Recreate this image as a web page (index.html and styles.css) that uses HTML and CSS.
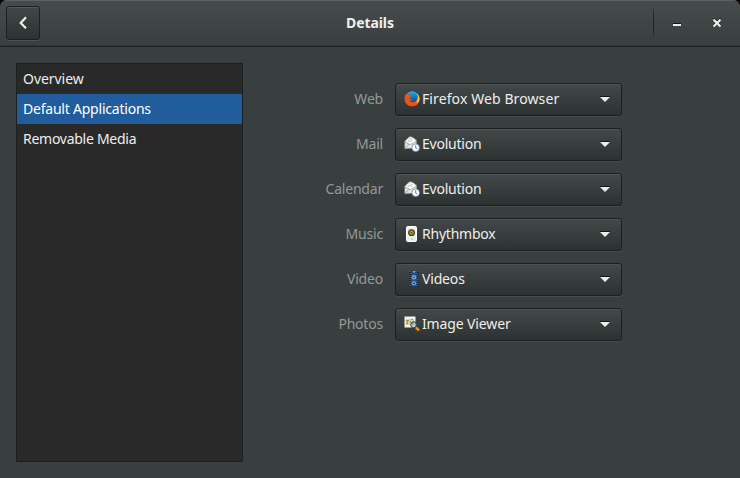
FILE: index.html
```html
<!DOCTYPE html>
<html lang="en">
<head>
<meta charset="utf-8">
<title>Details</title>
<link rel="stylesheet" href="styles.css">
</head>
<body>
<div class="window">
  <header class="titlebar">
    <button class="back" aria-label="Back"><svg width="16" height="16" viewBox="0 0 16 16"><path d="M11 2.2 5.7 8l5.3 5.2" fill="none" stroke="#eeeeec" stroke-width="2.2"/></svg></button>
    <h1 class="title">Details</h1>
    <div class="controls">
      <svg class="minimize" width="8" height="4" viewBox="0 0 8 4"><path d="M0 0h8v1H0z" fill="#141717"/><path d="M0 1h8v2H0z" fill="#eeeeec"/></svg>
      <svg class="close" width="8" height="10" viewBox="0 0 8 10"><path d="m.5.5 7 7m0-7-7 7" stroke="#171a1a" stroke-width="2.2"/><path d="m.5 1.5 7 7m0-7-7 7" stroke="#eeeeec" stroke-width="2.2"/></svg>
    </div>
  </header>
  <main class="content">
    <nav class="sidebar">
      <div class="item"><span class="t-overview">Overview</span></div>
      <div class="item selected"><span class="t-default">Default Applications</span></div>
      <div class="item"><span class="t-media">Removable Media</span></div>
    </nav>
    <section class="form">
      <label class="label">Web</label>
      <button class="combo">
        <svg class="icon" width="16" height="16" viewBox="0 0 16 16"><defs><linearGradient id="fox" x1="0" y1="1" x2="1" y2="0"><stop stop-color="#d82b17"/><stop offset=".55" stop-color="#ee6512"/><stop offset="1" stop-color="#ffd54a"/></linearGradient><linearGradient id="globe" x1="0" y1="0" x2="0" y2="1"><stop stop-color="#22aee5"/><stop offset="1" stop-color="#1c3979"/></linearGradient></defs><circle cx="8" cy="8" r="7.6" fill="url(#fox)"/><circle cx="8.2" cy="6.3" r="5.9" fill="url(#globe)"/><path d="M1.3 3.2 3 4.1c1-.6 1.8-.4 2.2.2L7 5 5.7 6.6l-.5 1 1.3.8 1.8.1c-.5 1.3-1.7 1.5-2.8 1.2 1.6 1.8 4.6 1.9 6.3.3L11 14l-6 .8L1.2 11 .8 6z" fill="#e95516"/><path d="M12.7 2.4c1.7 2.4 1.5 5.6-.5 8.2l1.6 1.1c2.4-2.8 2.3-6.7-1.1-9.3z" fill="#ffc33d"/></svg>
        <span class="t-firefox">Firefox Web Browser</span><i class="arrow"></i>
      </button>
      <label class="label">Mail</label>
      <button class="combo">
        <svg class="icon" width="16" height="16" viewBox="0 0 16 16"><use href="#mail"/></svg>
        <span class="t-evolution">Evolution</span><i class="arrow"></i>
      </button>
      <label class="label">Calendar</label>
      <button class="combo">
        <svg class="icon" width="16" height="16" viewBox="0 0 16 16"><g id="mail"><path d="M.7 5.3 5.2.7h2.5l4.8 3.4.6 8.2-12.5.5z" fill="#e3e2df" stroke="#77756f" stroke-width=".5"/><path d="m2.6 3.4 7-1.1 2 3.8-4.5 2.6-4.2-2.1z" fill="#fff"/><path d="m3.5 4.3 5.3-.8M3.9 5.6l4.7-.7" stroke="#aaa9a5" stroke-width=".6"/><path d="m.8 6 5.4 2.5 6.3-3.2M1.1 12.3l4-4.1" fill="none" stroke="#8c8b86" stroke-width=".7"/><circle cx="11.7" cy="11.7" r="3.8" fill="#fff" stroke="#7484a9" stroke-width=".8"/><path d="M11.7 9.2v2.9l1.5.9" fill="none" stroke="#485987" stroke-width=".8"/></g></svg>
        <span class="t-evolution">Evolution</span><i class="arrow"></i>
      </button>
      <label class="label">Music</label>
      <button class="combo">
        <svg class="icon" width="16" height="16" viewBox="0 0 16 16"><rect x="2.5" y=".5" width="10" height="15" rx="1.3" fill="#eeeeec" stroke="#fff"/><circle cx="7.5" cy="6.7" r="3.4" fill="#34341f"/><circle cx="7.5" cy="6.7" r="2.4" fill="#a49430"/><circle cx="7.5" cy="6.7" r=".8" fill="#514b22"/><circle cx="8" cy="12.8" r="1" fill="#c9c9c7"/></svg>
        <span class="t-rhythmbox">Rhythmbox</span><i class="arrow"></i>
      </button>
      <label class="label">Video</label>
      <button class="combo">
        <svg class="icon" width="16" height="16" viewBox="0 0 16 16"><path d="M5 0h10v16H5z" fill="#20272d"/><path d="M7 .5h6v15H7z" fill="#284d82"/><circle cx="10" cy="6.2" r="2.3" fill="#74a6df"/><circle cx="10" cy="12.3" r="2.3" fill="#6495d0"/><path d="M8.3 0 10 2l2-2z" fill="#70a2dc"/><circle cx="10" cy="6.2" r=".8" fill="#1c3861"/><circle cx="10" cy="12.3" r=".8" fill="#1c3861"/><path d="M6 0v16M14 0v16" stroke="#737b7b" stroke-width="1" stroke-dasharray="1 1"/></svg>
        <span class="t-videos">Videos</span><i class="arrow"></i>
      </button>
      <label class="label">Photos</label>
      <button class="combo">
        <svg class="icon" width="16" height="16" viewBox="0 0 16 16"><path d="M.5.5h11v11H.5z" fill="#f4f3ec"/><path d="M2 3h8v6H2z" fill="#d8d7a4"/><path d="m2 4 2 3-2 1m4-3 2 3 2-3" fill="none" stroke="#679049"/><path d="M3 4.5h2m2-1h2" stroke="#c58125"/><circle cx="9.7" cy="8.8" r="3" fill="#8193a0" fill-opacity=".45" stroke="#354963" stroke-width="1"/><path d="m12 11.7 3 3" stroke="#86510d" stroke-width="3.4"/><path d="m12 11.5 3 2.9" stroke="#f09b21" stroke-width="2"/></svg>
        <span class="t-image">Image Viewer</span><i class="arrow"></i>
      </button>
    </section>
  </main>
</div>
</body>
</html>
```
FILE: styles.css
```css
* { box-sizing: border-box; }
body { margin: 0; background: #080506; font: 14px/20px "Noto Sans", sans-serif; color: #eeeeec; }
button { font: inherit; color: inherit; padding: 0; }
svg { display: block; }
.window { width: 740px; height: 478px; border-radius: 7px 7px 0 0; overflow: hidden; background: #393f3f; }
.titlebar { height: 47px; display: grid; grid-template-columns: 1fr auto 1fr; align-items: center; padding: 0 19px 1px 6px; background: linear-gradient(#454c4b, #393f3f); border-bottom: 1px solid #1e2222; box-shadow: inset 0 1px #596362, inset 0 -1px #303535; }
.back { width: 34px; height: 34px; display: grid; place-items: center; border: 1px solid #1d2020; border-radius: 3px; background: linear-gradient(#424848, #2d3232); box-shadow: inset 0 1px #535a59, 0 1px #4b5251; }
.title { margin: 0 0 0 13px; font-size: 14px; font-weight: 700; line-height: 20px; letter-spacing: -.1px; }
.controls { justify-self: end; display: flex; align-items: center; height: 34px; }
.controls::before { content: ""; width: 1px; height: 34px; margin-right: 19px; background: linear-gradient(transparent, #1e2222 30%, #1e2222 70%, transparent); }
.minimize { margin: 4px 32px 0 0; }
.close { margin-top: 0; }
.content { display: flex; padding: 16px; height: 431px; }
.sidebar { width: 227px; height: 399px; border: 1px solid #1d2020; background: #292929; }
.item { height: 30px; padding: 5px 6px; white-space: nowrap; }
.selected { background: #215d9c; color: #fff; }
.form { width: 379px; padding-top: 20px; display: grid; grid-template-columns: 140px 227px; grid-auto-rows: 33px; gap: 12px; align-content: start; }
.label { justify-self: end; align-self: center; padding-bottom: 2px; color: #939898; letter-spacing: -.2px; }
.combo { height: 33px; display: flex; align-items: center; text-align: left; padding: 0 11px 2px 8px; border: 1px solid #1c1f1f; border-radius: 3px; background: linear-gradient(#434949, #2c3131); box-shadow: inset 0 1px #4e5554, 0 1px #454c4b; white-space: nowrap; }
.icon { width: 16px; height: 16px; flex: none; margin-right: 2px; }
.arrow { width: 10px; height: 6px; margin: 1px 0 0 auto; background: linear-gradient(#151818 1px, #eeeeec 1px); clip-path: polygon(0 0, 100% 0, 100% 1px, 50% 100%, 0 1px); }
.t-overview { letter-spacing: -.05px; }
.t-default { letter-spacing: -.22px; }
.t-media { letter-spacing: -.27px; }
.t-firefox { letter-spacing: .1px; }
.t-evolution { letter-spacing: -.22px; }
.t-rhythmbox { letter-spacing: -.22px; }
.t-videos { letter-spacing: -.17px; }
.t-image { letter-spacing: -.13px; }
```
